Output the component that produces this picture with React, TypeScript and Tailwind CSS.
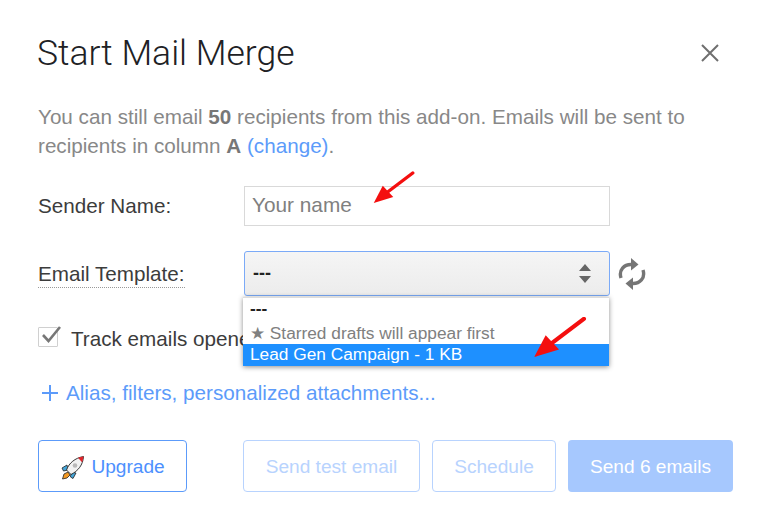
const RedArrow = ({ className }: { className: string }) => (
  <svg className={className} viewBox="0 0 56 44" fill="none">
    <path d="M53 2 L16 30" stroke="#f40f0f" strokeWidth="4.5" strokeLinecap="round" />
    <path d="M1 42 L13 19 L27 34 Z" fill="#f40f0f" />
  </svg>
);

const Rocket = () => (
  <svg className="w-[24px] h-[25px]" viewBox="0 0 24 25">
    <path d="M7 17 L3 19 L1.5 24 L6 23 L9 20 Z" fill="#f59a23" stroke="#222" strokeWidth="0.8" />
    <path d="M6 10 L1 13 L2.5 16 L7 15 Z" fill="#45a5d8" stroke="#222" strokeWidth="0.8" />
    <path d="M15 18 L12 23.5 L9.5 22 L10 17 Z" fill="#45a5d8" stroke="#222" strokeWidth="0.8" />
    <path d="M5.5 15 C8 8 14 3 22.5 1.5 C22 10 17 16 10 19.5 Z" fill="#f2f2f2" stroke="#222" strokeWidth="0.9" />
    <path d="M17 2.8 C19 2.2 21 1.8 22.5 1.5 C22.3 3.5 21.8 5.5 21 7.2 Z" fill="#e0242a" />
    <circle cx="14" cy="10.5" r="2.3" fill="#b9b9b9" />
  </svg>
);

const RefreshIcon = () => (
  <svg className="w-[28px] h-[34px]" viewBox="0 0 28 34" fill="none">
    <path d="M3 21 C0.5 13 6 7 14 7.5" stroke="#757575" strokeWidth="3.4" />
    <path d="M13 1 L20.5 7.5 L13 13.5 Z" fill="#757575" />
    <path d="M25 13 C27.5 21 22 27 14 26.5" stroke="#757575" strokeWidth="3.4" />
    <path d="M15 20.5 L7.5 26.5 L15 33 Z" fill="#757575" />
  </svg>
);

export default function App() {
  return (
    <div className="relative w-[768px] h-[527px] bg-white overflow-hidden font-['Liberation_Sans',Arial,sans-serif] text-[20.67px] text-[#3c3c3c]">
      <div className="pl-[38px] pr-[35px] pt-[31px]">
        <div className="flex items-center justify-between h-[44px]">
          <h1 className="text-[35.5px] leading-[44px] text-[#202124] font-['Roboto',sans-serif] font-light -ml-[1px]">
            Start Mail Merge
          </h1>
          <svg className="w-[20px] h-[20px] mr-[13px]" viewBox="0 0 20 20" fill="none">
            <path d="M2 2 L18 18 M18 2 L2 18" stroke="#6f6f6f" strokeWidth="2" />
          </svg>
        </div>

        <p className="mt-[27px] w-[690px] leading-[29px] text-[#888]">
          You can still email <b className="text-[#777]">50</b> recipients from this add-on. Emails will be sent to
          <br />
          recipients in column <b className="text-[#777]">A</b> <span className="text-[#5c9bfa]">(change)</span>.
        </p>

        <div className="mt-[26px] flex items-center h-[40px]">
          <label className="w-[206px] pb-[2px]">Sender Name:</label>
          <div className="w-[366px] h-[40px] border border-[#d9d9d9] flex items-center pl-[7px] pb-[2px] text-[#808080] text-[20.8px]">
            Your name
          </div>
        </div>

        <div className="mt-[25px] flex items-center h-[45px]">
          <div className="w-[206px]">
            <label className="border-b border-dotted border-[#999] leading-[26px] inline-block">Email Template:</label>
          </div>
          <div className="w-[366px] h-[45px] border border-[#7baaf7] rounded-[3px] bg-gradient-to-b from-[#f5f5f5] to-[#ececec] flex items-center justify-between pl-[8px] pr-[18px] font-bold text-[18px] text-[#222]">
            <span>---</span>
            <svg className="w-[12px] h-[20px]" viewBox="0 0 12 20" fill="#666">
              <path d="M6 0 L12 7 L0 7 Z M0 12 L12 12 L6 19 Z" />
            </svg>
          </div>
          <div className="ml-[8px]">
            <RefreshIcon />
          </div>
        </div>

        <div className="mt-[29px] flex items-center h-[26px]">
          <span className="relative w-[20px] h-[20px] border border-[#d0d0d0] rounded-[1px] mr-[13px] -mt-[2px]">
            <svg className="absolute -top-[3px] left-[1px] w-[22px] h-[20px]" viewBox="0 0 22 20" fill="none">
              <path d="M3 10 L8.5 16 L20 2" stroke="#777" strokeWidth="2.6" />
            </svg>
          </span>
          <span>Track emails opened</span>
        </div>

        <div className="mt-[27px] flex items-center h-[29px] text-[#5c9bfa]">
          <svg className="w-[16px] h-[16px] ml-[4px] mr-[8px]" viewBox="0 0 16 16" fill="none">
            <path d="M8 0 V16 M0 8 H16" stroke="#5c9bfa" strokeWidth="2" />
          </svg>
          <span>Alias, filters, personalized attachments...</span>
        </div>

        <div className="mt-[33px] flex items-stretch h-[52px] text-[19.1px]">
          <button className="w-[149px] border border-[#5c9bfa] rounded-[4px] text-[#4d90fe] flex items-center justify-center gap-[6px] pt-[2px] pl-[1px]">
            <Rocket />
            Upgrade
          </button>
          <button className="ml-[56px] w-[177px] border border-[#b8d3fe] rounded-[4px] text-[#b8d3fe] pt-[2px]">
            Send test email
          </button>
          <button className="ml-[12px] w-[124px] border border-[#b8d3fe] rounded-[4px] text-[#b8d3fe] pt-[2px]">
            Schedule
          </button>
          <button className="ml-[12px] w-[165px] rounded-[4px] bg-[#a6c8fe] text-white pt-[2px]">
            Send 6 emails
          </button>
        </div>
      </div>

      {/* open select list sits on top of the form */}
      <div className="absolute left-[243px] top-[297px] w-[366px] h-[69px] bg-white border-t border-[#ddd] shadow-[0_1px_5px_rgba(0,0,0,0.45)] text-[17.3px]">
        <div className="h-[23px] pl-[7px] font-bold text-[#222] leading-[21px]">---</div>
        <div className="h-[23px] pl-[7px] text-[#808080] leading-[24px]">★ Starred drafts will appear first</div>
        <div className="h-[22px] pl-[7px] bg-[#1e90ff] text-white leading-[20px]">Lead Gen Campaign - 1 KB</div>
      </div>

      <RedArrow className="absolute left-[373px] top-[171px] w-[42px] h-[34px]" />
      <RedArrow className="absolute left-[532px] top-[317px] w-[56px] h-[42px]" />
    </div>
  );
}
